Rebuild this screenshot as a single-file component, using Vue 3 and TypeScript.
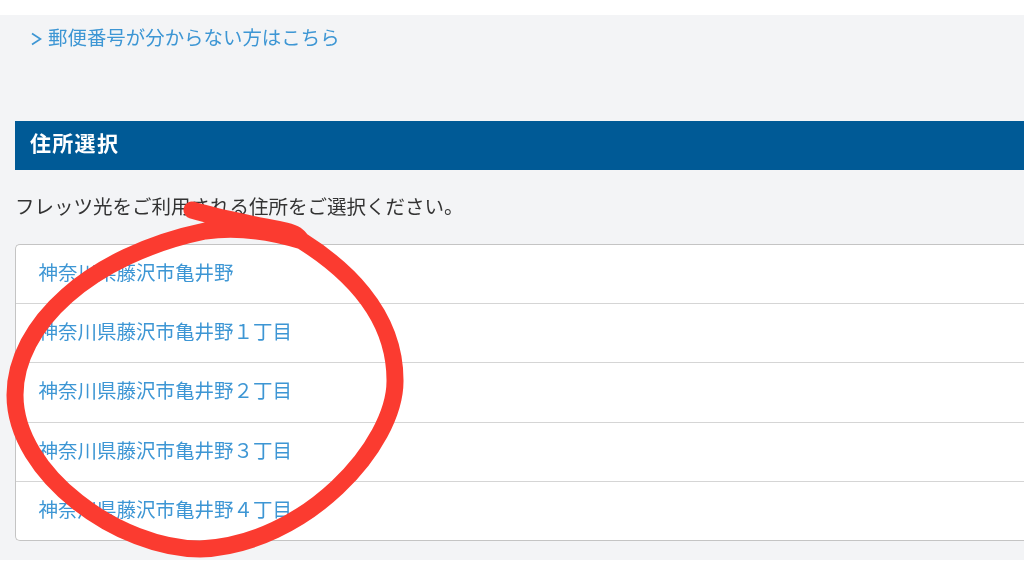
<script setup lang="ts">
const addresses = [
  '神奈川県藤沢市亀井野',
  '神奈川県藤沢市亀井野１丁目',
  '神奈川県藤沢市亀井野２丁目',
  '神奈川県藤沢市亀井野３丁目',
  '神奈川県藤沢市亀井野４丁目',
]
</script>

<template>
  <div class="page">
    <main class="panel">
      <a class="help-link">
        <svg class="chevron" viewBox="0 0 11 14" width="11" height="14" aria-hidden="true">
          <path d="M1 1.5 L9.5 7 L1 12.5" fill="none" stroke="#3d96d4" stroke-width="1.7" />
        </svg>
        <span>郵便番号が分からない方はこちら</span>
      </a>

      <h2 class="section-title">住所選択</h2>
      <p class="lead">フレッツ光をご利用される住所をご選択ください。</p>

      <ul class="address-list">
        <li v-for="a in addresses" :key="a" class="address-row">
          <a>{{ a }}</a>
        </li>
      </ul>
    </main>

    <!-- 手書きの赤い丸（スクリーンショット上の書き込み） -->
    <svg class="scribble" viewBox="0 0 1024 576" width="1024" height="576" aria-hidden="true">
      <path
        d="M192 210 C225 220 262 226 286 231 C295 233 298 236 302 241 C340 265 395 310 395 380 C396 445 305 545 200 549 C120 549 15 475 15 395 C15 325 90 255 205 231 C235 227 270 231 302 241"
        fill="none"
        stroke="#fb3b30"
        stroke-width="17"
        stroke-linecap="round"
        stroke-linejoin="round"
      />
    </svg>
  </div>
</template>

<style scoped>
.page {
  position: relative;
  width: 1024px;
  height: 576px;
  overflow: hidden;
  padding: 15px 0 16px;
  box-sizing: border-box;
  background: #fff;
  font-family: 'Liberation Sans', 'Noto Sans CJK JP', sans-serif;
}
.panel {
  height: 100%;
  padding-left: 15px;
  background: #f3f4f6;
  display: flex;
  flex-direction: column;
  filter: blur(0.55px);
}
.help-link {
  display: flex;
  align-items: center;
  gap: 6px;
  margin-left: 16px;
  height: 46px;
  padding-bottom: 1px;
  box-sizing: border-box;
  font-size: 19.45px;
  line-height: 46px;
  color: #3d96d4;
}
.chevron {
  flex-shrink: 0;
  margin-top: 3px;
}
.section-title {
  margin: 60px 0 0;
  height: 49px;
  padding-left: 15px;
  background: #005a96;
  color: #fff;
  font-size: 21px;
  font-weight: bold;
  letter-spacing: 1.3px;
  line-height: 46px;
}
.lead {
  margin: 0;
  height: 74px;
  padding-top: 22px;
  box-sizing: border-box;
  font-size: 19.5px;
  line-height: 30px;
  color: #333;
}
.address-list {
  list-style: none;
  margin: 0;
  padding: 0;
  height: 297px;
  box-sizing: border-box;
  border: 1px solid #c4c4c4;
  border-right: none;
  border-radius: 5px 0 0 5px;
  background: #fff;
}
.address-row {
  height: 59.2px;
  box-sizing: border-box;
  padding-left: 22.5px;
  border-bottom: 1px solid #d5d5d5;
  font-size: 19.5px;
  line-height: 56px;
  color: #3d96d4;
}
.address-row:last-child {
  border-bottom: none;
}
.scribble {
  position: absolute;
  top: 0;
  left: 0;
}
</style>

<style>
html,
body {
  margin: 0;
}
</style>
